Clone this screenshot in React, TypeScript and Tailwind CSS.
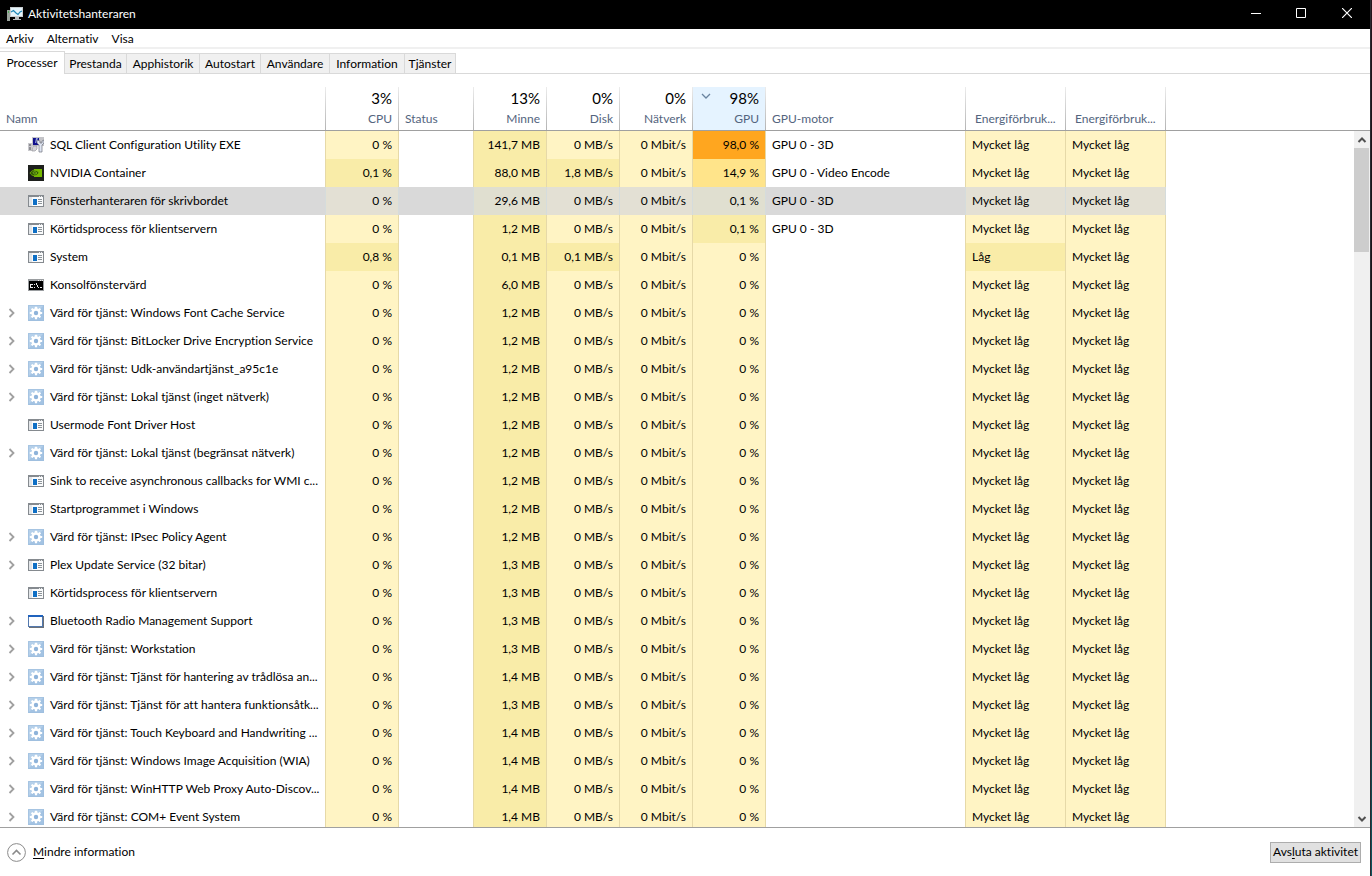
import { useState } from "react";
import type { ReactNode } from "react";
import clsx from "clsx";

type IconKind = "sql" | "nvidia" | "app" | "console" | "service" | "window";

interface Process {
  name: string;
  icon: IconKind;
  expandable?: boolean;
  cpu?: string;
  memory: string;
  disk?: string;
  gpu?: string;
  engine?: string;
  power?: string;
}

const processes: Process[] = [
  { name: "SQL Client Configuration Utility EXE", icon: "sql", memory: "141,7 MB", gpu: "98,0 %", engine: "GPU 0 - 3D" },
  { name: "NVIDIA Container", icon: "nvidia", cpu: "0,1 %", memory: "88,0 MB", disk: "1,8 MB/s", gpu: "14,9 %", engine: "GPU 0 - Video Encode" },
  { name: "Fönsterhanteraren för skrivbordet", icon: "app", memory: "29,6 MB", gpu: "0,1 %", engine: "GPU 0 - 3D" },
  { name: "Körtidsprocess för klientservern", icon: "app", memory: "1,2 MB", gpu: "0,1 %", engine: "GPU 0 - 3D" },
  { name: "System", icon: "app", cpu: "0,8 %", memory: "0,1 MB", disk: "0,1 MB/s", power: "Låg" },
  { name: "Konsolfönstervärd", icon: "console", memory: "6,0 MB" },
  { name: "Värd för tjänst: Windows Font Cache Service", icon: "service", expandable: true, memory: "1,2 MB" },
  { name: "Värd för tjänst: BitLocker Drive Encryption Service", icon: "service", expandable: true, memory: "1,2 MB" },
  { name: "Värd för tjänst: Udk-användartjänst_a95c1e", icon: "service", expandable: true, memory: "1,2 MB" },
  { name: "Värd för tjänst: Lokal tjänst (inget nätverk)", icon: "service", expandable: true, memory: "1,2 MB" },
  { name: "Usermode Font Driver Host", icon: "app", memory: "1,2 MB" },
  { name: "Värd för tjänst: Lokal tjänst (begränsat nätverk)", icon: "service", expandable: true, memory: "1,2 MB" },
  { name: "Sink to receive asynchronous callbacks for WMI c...", icon: "app", memory: "1,2 MB" },
  { name: "Startprogrammet i Windows", icon: "app", memory: "1,2 MB" },
  { name: "Värd för tjänst: IPsec Policy Agent", icon: "service", expandable: true, memory: "1,2 MB" },
  { name: "Plex Update Service (32 bitar)", icon: "app", expandable: true, memory: "1,3 MB" },
  { name: "Körtidsprocess för klientservern", icon: "app", memory: "1,3 MB" },
  { name: "Bluetooth Radio Management Support", icon: "window", expandable: true, memory: "1,3 MB" },
  { name: "Värd för tjänst: Workstation", icon: "service", expandable: true, memory: "1,3 MB" },
  { name: "Värd för tjänst: Tjänst för hantering av trådlösa an...", icon: "service", expandable: true, memory: "1,4 MB" },
  { name: "Värd för tjänst: Tjänst för att hantera funktionsåtk...", icon: "service", expandable: true, memory: "1,3 MB" },
  { name: "Värd för tjänst: Touch Keyboard and Handwriting ...", icon: "service", expandable: true, memory: "1,4 MB" },
  { name: "Värd för tjänst: Windows Image Acquisition (WIA)", icon: "service", expandable: true, memory: "1,4 MB" },
  { name: "Värd för tjänst: WinHTTP Web Proxy Auto-Discov...", icon: "service", expandable: true, memory: "1,4 MB" },
  { name: "Värd för tjänst: COM+ Event System", icon: "service", expandable: true, memory: "1,4 MB" },
];

const tabs = [
  { label: "Processer", width: "w-[65px]" },
  { label: "Prestanda", width: "w-[62px]" },
  { label: "Apphistorik", width: "w-[73px]" },
  { label: "Autostart", width: "w-[61px]" },
  { label: "Användare", width: "w-[69px]" },
  { label: "Information", width: "w-[75px]" },
  { label: "Tjänster", width: "w-[51px]" },
];

const columns = [
  { label: "Namn", width: "w-[326px]", align: "left" },
  { label: "CPU", width: "w-[73px]", align: "right", total: "3%" },
  { label: "Status", width: "w-[75px]", align: "left" },
  { label: "Minne", width: "w-[73px]", align: "right", total: "13%" },
  { label: "Disk", width: "w-[73px]", align: "right", total: "0%" },
  { label: "Nätverk", width: "w-[73px]", align: "right", total: "0%" },
  { label: "GPU", width: "w-[73px]", align: "right", total: "98%", sorted: true },
  { label: "GPU-motor", width: "w-[200px]", align: "left" },
  { label: "Energiförbruk...", width: "w-[100px]", align: "indent" },
  { label: "Energiförbruk...", width: "w-[100px]", align: "indent" },
];

const gearTeeth = [0, 45, 90, 135];

function ProcessIcon({ kind }: { kind: IconKind }) {
  switch (kind) {
    case "sql":
      return (
        <svg viewBox="0 0 16 16" className="size-4 shrink-0" aria-hidden="true">
          <path d="M4 0h12v9H4z" fill="#c4c4c8" />
          <path d="M5 1h6v7H5z" fill="#10108c" />
          <path d="M8 1h2L8 6H7z" fill="#8f9fe0" />
          <path d="M0 6h4v8H0z" fill="#c9c9cd" />
          <path d="M1 7h2v2H1zM1 10h2v3H1z" fill="#8d8d93" />
          <path d="M5 9h4v3l-2 2H4z" fill="#d5d5d9" stroke="#8b8b90" strokeWidth=".6" />
          <path d="M9 3v3l2 2v7h3V8l2-2V3l-2 1v2h-2V4z" fill="#dfe5f2" stroke="#70747f" strokeWidth=".7" />
        </svg>
      );
    case "nvidia":
      return (
        <svg viewBox="0 0 16 16" className="size-4 shrink-0" aria-hidden="true">
          <path d="M0 0h16v16H0z" fill="#1d1f1c" />
          <path d="M6 4h8v8H6z" fill="#76b900" />
          <path d="M2 8c1.500-2.200 3.200-3 5-2.800 2 .3 3.400 1.600 4 2.600-1 1.700-2.600 2.900-4.600 2.900C4.300 10.700 2.800 9.500 2 8z" fill="#335a08" stroke="#76b900" strokeWidth=".8" />
          <path d="M4.500 8c.8-1 1.700-1.300 2.600-1.200 1 .2 1.600.8 1.900 1.200-.6.700-1.300 1.100-2.200 1.100C5.900 9 5.500 8.600 5.600 8" fill="none" stroke="#86c91a" strokeWidth=".8" />
        </svg>
      );
    case "app":
      return (
        <svg viewBox="0 0 16 16" className="size-4 shrink-0" shapeRendering="crispEdges" aria-hidden="true">
          <path d="M0 2h16v12H0z" fill="#858a8f" />
          <path d="M1 4h14v9H1z" fill="#fafbfc" />
          <path d="M1 4h3v9H1z" fill="#e3e6e9" />
          <path d="M5 6h4v6H5z" fill="#0e6fc5" />
          <path d="M10 6h4v1h-4zM10 8h4v1h-4zM10 10h4v1h-4z" fill="#8d9499" />
          <path d="M11 3h1v1h-1zM13 3h1v1h-1z" fill="#e8eaec" />
        </svg>
      );
    case "console":
      return (
        <svg viewBox="0 0 16 16" className="size-4 shrink-0" shapeRendering="crispEdges" aria-hidden="true">
          <path d="M0 2h16v12H0z" fill="#9a9da0" />
          <path d="M1 4h14v9H1z" fill="#000" />
          <path d="M10 3h1v1h-1zM12 3h1v1h-1zM14 3h1v1h-1z" fill="#eee" />
          <path d="M2 7h3v1H3v2h2v1H2zM6 7h1v1H6zM6 10h1v1H6zM8 6h1v2h1v2h1v1h-1v-1H9V8H8zM12 10h2v1h-2z" fill="#e9e9e9" />
        </svg>
      );
    case "window":
      return (
        <svg viewBox="0 0 16 16" className="size-4 shrink-0" shapeRendering="crispEdges" aria-hidden="true">
          <path d="M0 2h15v12H0z" fill="#5278ae" />
          <path d="M15 3h1v12H1v-1h14z" fill="#6b7077" />
          <path d="M0 2h15v2H0z" fill="#1f62bd" />
          <path d="M1 4h13v9H1z" fill="#fcfdff" />
        </svg>
      );
    default:
      return (
        <svg viewBox="0 0 16 16" className="size-4 shrink-0" aria-hidden="true">
          <path d="M0 0h16v16H0z" fill="#a3c3e3" />
          <path d="M0 0h16L0 16z" fill="#b5d0ea" />
          <path d="M.5.5h15v15H.5z" fill="none" stroke="#9cbcdc" strokeWidth=".6" />
          {gearTeeth.map((angle) => (
            <rect key={angle} x="6.900" y="1.800" width="2.200" height="12.400" rx=".5" fill="#fff" transform={`rotate(${angle} 8 8)`} />
          ))}
          <circle cx="8" cy="8" r="4.700" fill="#fff" />
          <circle cx="8" cy="8" r="2.200" fill="#8eb3da" />
        </svg>
      );
  }
}

function Chevron({ className, d = "M1 1l4 4 4-4", width = "2" }: { className: string; d?: string; width?: string }) {
  return (
    <svg viewBox="0 0 10 6" className={className} fill="none" stroke="currentColor" strokeWidth={width} aria-hidden="true">
      <path d={d} />
    </svg>
  );
}

type Heat = "none" | "low" | "mid" | "warm" | "hot";

const heatClass: Record<Heat, string> = {
  none: "",
  low: "bg-[#fff4c4]",
  mid: "bg-[#f9eca8]",
  warm: "bg-[#ffe48a]",
  hot: "bg-[#ffa61f]",
};

const selectedHeatClass: Record<Heat, string> = {
  none: "bg-[#d9d9d9]",
  low: "bg-[#e3e0d4]",
  mid: "bg-[#e0dfd0]",
  warm: "bg-[#e0dcc4]",
  hot: "bg-[#e3c89c]",
};

function Cell({ heat, selected, right, children }: { heat: Heat; selected: boolean; right?: boolean; children?: ReactNode }) {
  return (
    <td
      className={clsx(
        "border-r px-1.5",
        right && "text-right",
        selected ? "border-[#d5dcdc]" : "border-[#e6d9a8]",
        selected ? selectedHeatClass[heat] : heatClass[heat],
      )}
    >
      {children}
    </td>
  );
}

function TitleBar() {
  return (
    <header className="flex h-[29px] shrink-0 items-center bg-black pb-px pl-[7px] text-white">
      <svg viewBox="0 0 16 16" className="size-4" aria-hidden="true">
        <path d="M0 4h3v11H0z" fill="#9aa39c" />
        <path d="M1 5h1v2H1z" fill="#4fae59" />
        <path d="M3 1h13v10H3z" fill="#c8cdd0" />
        <path d="M4 2h11v8H4z" fill="#e4f4fb" />
        <path d="M4 6l2.500-1.500L9 7l2 1.500L13 6l2-1" fill="none" stroke="#1d87b8" strokeWidth="1.200" />
        <path d="M8 11h4v2h2v1H6v-1h2z" fill="#b5babd" />
      </svg>
      <h1 className="ml-[5px] flex-1">Aktivitetshanteraren</h1>
      <button type="button" aria-label="Minimera" className="flex h-[26px] w-[45px] items-center justify-center self-start">
        <svg viewBox="0 0 10 10" className="size-[10px]" aria-hidden="true"><path d="M0 5h10v1H0z" fill="currentColor" /></svg>
      </button>
      <button type="button" aria-label="Maximera" className="flex h-[26px] w-[46px] items-center justify-center self-start">
        <svg viewBox="0 0 10 10" className="size-[10px]" aria-hidden="true"><path d="M.5.5h9v9h-9z" fill="none" stroke="currentColor" /></svg>
      </button>
      <button type="button" aria-label="Stäng" className="flex h-[26px] w-[46px] items-center justify-center self-start">
        <svg viewBox="0 0 10 10" className="size-[10px]" aria-hidden="true"><path d="M0 0l10 10M10 0L0 10" fill="none" stroke="currentColor" strokeWidth="1.200" /></svg>
      </button>
    </header>
  );
}

function TabBar() {
  const [active, setActive] = useState("Processer");
  return (
    <div role="tablist" className="flex h-[25px] shrink-0 items-end border-b border-[#d9d9d9]">
      {tabs.map(({ label, width }) => (
        <button
          key={label}
          type="button"
          role="tab"
          aria-selected={active === label}
          onClick={() => setActive(label)}
          className={clsx(
            "flex shrink-0 items-center justify-center border-t border-r border-[#d9d9d9] whitespace-nowrap",
            width,
            active === label ? "-mb-px h-[23px] bg-white" : "h-5 bg-[#f0f0f0]",
          )}
        >
          {label}
        </button>
      ))}
    </div>
  );
}

function ProcessTable() {
  const [selected, setSelected] = useState(2);
  return (
    <table className="w-full table-fixed border-separate border-spacing-0 whitespace-nowrap">
      <thead>
        <tr className="h-11">
          {columns.map((column, index) => (
            <th
              key={index}
              scope="col"
              aria-sort={column.sorted ? "descending" : undefined}
              className={clsx(
                "border-b border-[#a0a0a0] bg-linear-to-b from-[#ececec] to-[#b4b4b4] bg-[length:1px_100%] bg-right bg-no-repeat p-0 font-normal",
                column.width,
                column.sorted && "bg-[#e5f3ff]",
              )}
            >
              <button
                type="button"
                className={clsx(
                  "relative flex h-[43px] w-full flex-col justify-end pb-px",
                  column.align === "right" ? "items-end pr-[7px]" : "items-start",
                  column.align === "left" && "pl-1.5",
                  column.align === "indent" && "pl-[9px]",
                )}
              >
                {column.sorted && <Chevron className="absolute top-[6px] left-2 h-[6px] w-[10px] text-[#6a84a0]" width="1.300" />}
                {column.total && <span className="text-[15px] leading-[22px] text-black">{column.total}</span>}
                <span className="leading-5 text-[#53647e]">{column.label}</span>
              </button>
            </th>
          ))}
          <th aria-hidden="true" className="border-b border-[#a0a0a0] p-0" />
        </tr>
      </thead>
      <tbody>
        {processes.map((process, index) => {
          const isSelected = index === selected;
          const gpuHeat: Heat = process.gpu === "98,0 %" ? "hot" : process.gpu === "14,9 %" ? "warm" : process.gpu ? "mid" : "low";
          return (
            <tr key={index} aria-selected={isSelected} onClick={() => setSelected(index)} className="h-7">
              <td className={clsx("border-r p-0", isSelected ? "border-[#d5dcdc] bg-[#d9d9d9]" : "border-[#e6d9a8]")}>
                <div className="flex items-center overflow-hidden">
                  <span className="flex w-7 shrink-0 pl-[7px]">
                    {process.expandable && (
                      <button type="button" aria-label={`Visa ${process.name}`} className="text-[#a0a0a0]">
                        <svg viewBox="0 0 10 10" className="size-[10px]" fill="none" stroke="currentColor" strokeWidth="1.800" aria-hidden="true">
                          <path d="M2.500 1l4 4-4 4" />
                        </svg>
                      </button>
                    )}
                  </span>
                  <ProcessIcon kind={process.icon} />
                  <span className="ml-1.5">{process.name}</span>
                </div>
              </td>
              <Cell heat={process.cpu ? "mid" : "low"} selected={isSelected} right>{process.cpu ?? "0 %"}</Cell>
              <Cell heat="none" selected={isSelected} />
              <Cell heat="mid" selected={isSelected} right>{process.memory}</Cell>
              <Cell heat={process.disk ? "mid" : "low"} selected={isSelected} right>{process.disk ?? "0 MB/s"}</Cell>
              <Cell heat="low" selected={isSelected} right>0 Mbit/s</Cell>
              <Cell heat={gpuHeat} selected={isSelected} right>{process.gpu ?? "0 %"}</Cell>
              <Cell heat="none" selected={isSelected}>{process.engine}</Cell>
              <Cell heat={process.power ? "mid" : "low"} selected={isSelected}>{process.power ?? "Mycket låg"}</Cell>
              <Cell heat="low" selected={isSelected}>Mycket låg</Cell>
              <td />
            </tr>
          );
        })}
      </tbody>
    </table>
  );
}

function ScrollBar() {
  return (
    <div className="flex w-4 shrink-0 flex-col">
      <div className="h-11 shrink-0 border-b border-[#a0a0a0]" />
      <div className="flex min-h-0 flex-1 flex-col bg-[#f0f0f0] text-[#505050]">
        <button type="button" aria-label="Rulla uppåt" className="flex h-[17px] w-[15px] shrink-0 items-center justify-center">
          <Chevron className="h-[6px] w-[10px]" d="M1.500 5L5 1.500 8.500 5" />
        </button>
        <div className="h-[104px] w-[15px] bg-[#cdcdcd]" />
        <button type="button" aria-label="Rulla nedåt" className="mt-auto flex h-[17px] w-[15px] shrink-0 items-center justify-center">
          <Chevron className="h-[6px] w-[10px]" d="M1.500 1L5 4.500 8.500 1" />
        </button>
      </div>
    </div>
  );
}

export default function App() {
  return (
    <div className="flex h-screen bg-white font-['Lato','Open_Sans',sans-serif] text-[12px] leading-4 text-black [font-variant-ligatures:none]">
      <main className="flex min-w-0 flex-1 flex-col">
        <TitleBar />
        <nav aria-label="Meny" className="flex h-5 shrink-0 items-center gap-[13px] border-b-2 border-[#f0f0f0] pt-px pl-1.5">
          <button type="button">Arkiv</button>
          <button type="button">Alternativ</button>
          <button type="button">Visa</button>
        </nav>
        <TabBar />
        <section className="mt-[13px] flex min-h-0 flex-1">
          <div className="min-w-0 flex-1 overflow-hidden">
            <ProcessTable />
          </div>
          <ScrollBar />
        </section>
        <footer className="flex h-[49px] shrink-0 items-center justify-between border-t border-[#a0a0a0] pr-[9px] pl-[7px]">
          <button type="button" className="flex items-center gap-[7px]">
            <svg viewBox="0 0 19 19" className="size-[19px]" fill="none" stroke="#8a8a8a" aria-hidden="true">
              <circle cx="9.500" cy="9.500" r="8.900" />
              <path d="M5.500 11.500l4-4 4 4" strokeWidth="1.600" />
            </svg>
            <span><span className="underline underline-offset-2">M</span>indre information</span>
          </button>
          <button type="button" className="h-[21px] border border-[#adadad] bg-[#e1e1e1] px-0.5 leading-4">
            Avs<span className="underline underline-offset-2">l</span>uta aktivitet
          </button>
        </footer>
      </main>
      <div aria-hidden="true" className="w-0.5 shrink-0 border-l border-[#2a2a30] bg-linear-to-b from-[#24151c] via-[#101216] to-[#0d5560]" />
    </div>
  );
}
